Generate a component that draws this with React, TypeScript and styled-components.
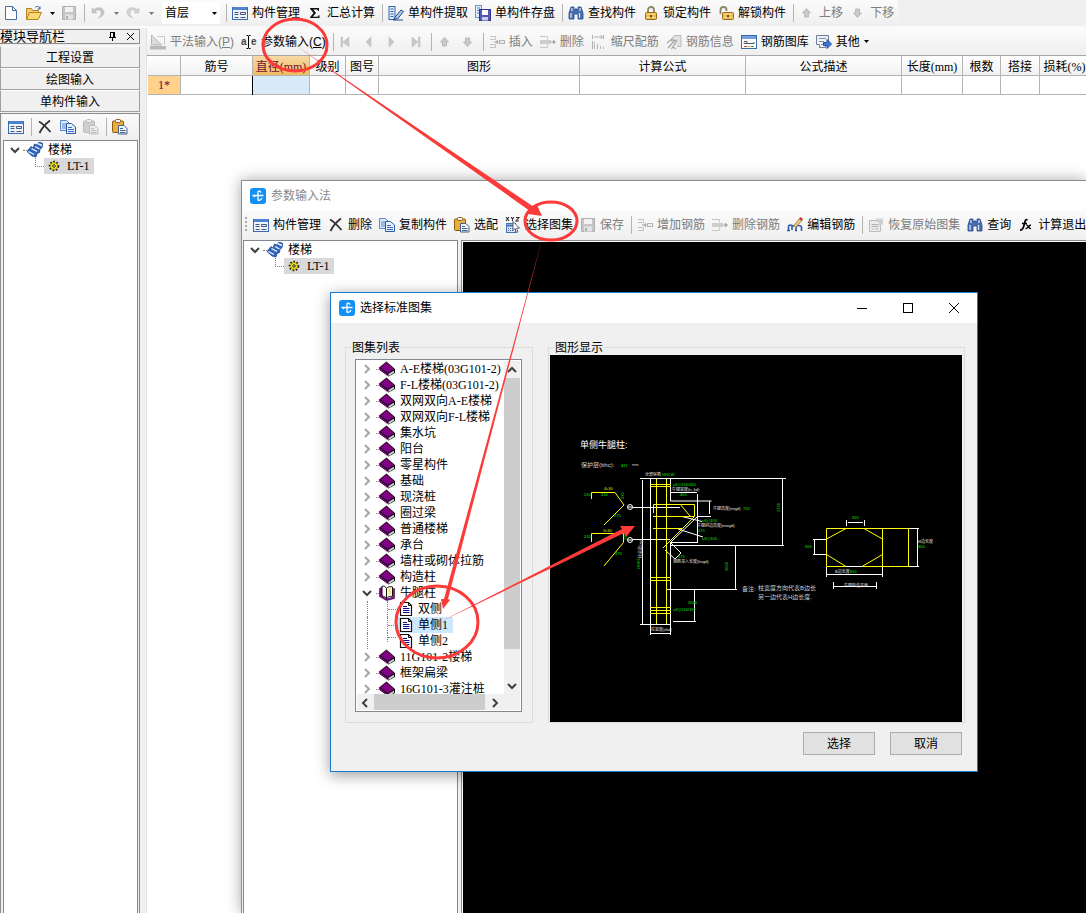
import React from "react";
import styled, { createGlobalStyle, css } from "styled-components";

const GlobalStyle = createGlobalStyle`
  *, *::before, *::after { box-sizing: border-box; }
  html, body { margin: 0; padding: 0; background: #f0f0f0; overflow: hidden; }
  body, button, select, table {
    font-family: "Liberation Serif", "Noto Sans CJK SC", sans-serif;
    font-size: 12px;
    line-height: 16px;
    color: #000;
  }
  button, select { margin: 0; padding: 0; border: 0; background: none; border-radius: 0; }
  ul { list-style: none; margin: 0; padding: 0; }
`;

/* ---------- icons ---------- */

const clipboard = (board: string, edge: string, paper: string, ink: string) => (
  <>
    <rect x="0.500" y="2" width="11" height="11.500" rx="1" fill={board} stroke={edge} />
    <rect x="3.500" y="0.500" width="5" height="3" rx="1" fill={paper} stroke={edge} />
    <path d="M6.500 6.500h5.500l3 3v5.500h-8.500z" fill={paper} stroke={ink} />
    <path d="M8 9.500h3M8 11.500h5.500M8 13.500h5.500" stroke={ink} />
  </>
);

const binoculars = (
  <>
    <path d="M3 2h3v3h1V4h2v1h1V2h3l2 6v6h-5V9H6v5H1V8z" fill="#4a6fb0" stroke="#27488a" strokeWidth=".8" />
    <path d="M3 8v5M11.500 8v5M4 3v3M12 3v3" stroke="#dbe8fa" strokeWidth="1.200" />
  </>
);

const rowsIn = (
  <>
    <path d="M1 2.500h5.500v3H1M1 13.500h5.500v-3H1" fill="none" stroke="#c2c2c2" />
    <path d="M5 8h5" fill="none" stroke="#aaa" />
    <path d="M9 5.500v5L6 8z" fill="#b4b4b4" />
    <rect x="10.500" y="6.500" width="5" height="3" fill="#eee" stroke="#b4b4b4" />
  </>
);

const rowsOut = (
  <>
    <path d="M0 2.500h7.500v3M0 13.500h7.500v-3" fill="none" stroke="#c6c6c6" />
    <rect x="0" y="6" width="11" height="4" fill="#cdcdcd" />
    <path d="M11 8h3" stroke="#a4a4a4" />
    <path d="M13 5.500v5L16 8z" fill="#a4a4a4" />
  </>
);

const padlock = (open: boolean) => (
  <>
    <path
      d={open ? "M2.500 9V5a3 3 0 0 1 6 0v1" : "M5 8V5a3 3 0 0 1 6 0v3"}
      fill="none"
      stroke="#8f8468"
      strokeWidth="1.800"
    />
    <rect x={open ? 4.5 : 2.5} y="7.500" width="11" height="7" rx="1" fill="#eebb50" stroke="#9c6a12" />
    <path d={open ? "M6 9h8M6 12.500h8" : "M4 9h8M4 12.500h8"} stroke="#fbe2a0" />
    <path d={open ? "M10 10v2.500" : "M8 10v2.500"} stroke="#4b3205" strokeWidth="1.500" />
  </>
);

const floppy = (body: string, edge: string) => (
  <>
    <path d="M1.500 1.500h13v13h-13z" fill={body} stroke={edge} />
    <rect x="4" y="2" width="8" height="5" fill="#f2f2f2" />
    <rect x="4" y="9.500" width="8" height="5" fill="#e4e4e4" />
    <rect x="5" y="11" width="2" height="3" fill={edge} />
  </>
);

const blockArrow = (
  <path d="M7.500 3.500L11.500 8h-2v4h-4V8h-2z" fill="#cacaca" stroke="#b0b0b0" strokeWidth=".8" />
);

const ICONS = {
  blank: <path d="M2.500 1.500h7l4 4v9h-11zM9.500 1.500v4h4" fill="#fff" stroke="#4a6ea0" />,
  folder: (
    <>
      <path d="M.5 14.500v-11h5l1 2h6v3" fill="#f3cf72" stroke="#b58322" />
      <path d="M.5 14.500l3-7h12l-3.500 7z" fill="#fbd875" stroke="#b58322" />
      <path d="M9 2.500c2-2 4-1 5 1m0-2v2.500h-2.500" fill="none" stroke="#36609c" />
    </>
  ),
  saveOff: floppy("#c6c6c6", "#b0b0b0"),
  undo: (
    <path d="M2 3v5h5L5.300 6.300C8 4 11 5 11 8c0 2-1 4-3 5 4-1 6-3 6-6 0-4-6-6-10.300-2.400z" fill="#c4c4c4" stroke="#b5b5b5" strokeWidth=".5" />
  ),
  redo: (
    <path d="M14 3v5H9l1.700-1.700C8 4 5 5 5 8c0 2 1 4 3 5-4-1-6-3-6-6 0-4 6-6 10.300-2.400z" fill="#d2d2d2" stroke="#bbb" strokeWidth=".5" />
  ),
  panel: (
    <>
      <rect x=".5" y="2.500" width="15" height="12" fill="#eef4fd" stroke="#3c68b0" />
      <rect x="1" y="2" width="14" height="3" fill="#4f82d0" />
      <path d="M2.500 7.500h4M2.500 9.500h4M2.500 12.500h4" stroke="#44587c" />
      <path d="M8.500 7.500h5v2h-5zM8.500 12.500h5" fill="none" stroke="#44587c" />
    </>
  ),
  sigma: <path d="M3 3h9v3h-1C10.800 4.800 10.400 4.400 9.300 4.400H6.300L9 8l-3.200 3.800h4c1 0 1.500-.4 1.700-1.600h1V13H3v-.8L6.500 8 3 3.800z" fill="#111" />,
  extract: (
    <>
      <rect x="1" y="1.500" width="6" height="13" fill="#dfeafb" stroke="#3566aa" />
      <path d="M2.500 4h3M2.500 6.500h3M2.500 9h3M2.500 11.500h3" stroke="#3566aa" />
      <path d="M6 13.500l7-8.500 2.500 1.500-6 7.500z" fill="#a9c7ee" stroke="#264d86" />
      <path d="M5 15h10" stroke="#264d86" />
    </>
  ),
  store: (
    <>
      <rect x=".5" y=".5" width="6" height="12" fill="#dfeafb" stroke="#6d94cc" />
      <path d="M2 3h3M2 5.500h3M2 8h3" stroke="#5a86c8" />
      <rect x="4.500" y="4.500" width="11" height="11" fill="#5458b4" stroke="#33368c" />
      <rect x="7" y="5" width="6" height="5" fill="#fff" />
      <rect x="7" y="12" width="6" height="3.500" fill="#c9cdea" />
    </>
  ),
  find: binoculars,
  lock: padlock(false),
  unlock: padlock(true),
  up: blockArrow,
  down: <g transform="rotate(180 7.500 8)">{blockArrow}</g>,
  ruler: (
    <>
      <path d="M1.500 1v10h10z" fill="#e0e0e0" stroke="#b5b5b5" />
      <path d="M7 2.500h7.500v8" fill="none" stroke="#c9c9c9" />
      <rect x="0" y="12" width="16" height="3.500" fill="#b9b9b9" />
      <path d="M4 6v3h3z" fill="#fff" stroke="#b5b5b5" strokeWidth=".5" />
    </>
  ),
  caretText: (
    <>
      <text x="0" y="11" fontFamily="Liberation Sans" fontWeight="bold" fontSize="10" fill="#444">a</text>
      <text x="10" y="11" fontFamily="Liberation Sans" fontWeight="bold" fontSize="10" fill="#444">e</text>
      <path d="M5.500 1.500H7l.5 1 .5-1h1.500M5.500 14.500H7l.5-1 .5 1h1.500M7.500 2.500v11" fill="none" stroke="#000" />
    </>
  ),
  first: <path d="M2 3h1.500v10H2zM10 3v10L4 8z" fill="#c8c8c8" stroke="#b8b8b8" strokeWidth=".5" />,
  prev: <path d="M9 3v10L4 8z" fill="#c8c8c8" stroke="#b8b8b8" strokeWidth=".5" />,
  next: <path d="M4 3v10l5-5z" fill="#c8c8c8" stroke="#b8b8b8" strokeWidth=".5" />,
  last: <path d="M12 3h-1.500v10H12zM4 3v10l6-5z" fill="#c8c8c8" stroke="#b8b8b8" strokeWidth=".5" />,
  insert: rowsIn,
  remove: rowsOut,
  scale: (
    <>
      <path d="M1.500 1v4M12.500 1v4M3 3h8M9.500 1l2 2-2 2M1.500 7v8" fill="none" stroke="#b0b0b0" />
      <path d="M3.500 8v7M6.500 10v5M9.500 12v3M12.500 13v2" stroke="#b8b8b8" />
    </>
  ),
  info: (
    <>
      <path d="M5.500 7.500V5l3-3.500h6.500v11h-4" fill="#e2e2e2" stroke="#bababa" />
      <path d="M1 9l5-4 2 2-5 6M2 14l7-8 1.500 1-5 8M7 13l3 2" fill="none" stroke="#a9a9a9" strokeWidth="1.300" />
    </>
  ),
  library: (
    <>
      <rect x=".5" y="1.500" width="15" height="13" fill="#fff" stroke="#3a6ab0" />
      <rect x="1" y="2" width="14" height="3" fill="#6fa0e0" />
      <path d="M3 7.500h3v2H3v-1M6 9.500h7V8" fill="none" stroke="#555" />
      <path d="M3 12.500h3" stroke="#d44" />
      <path d="M6.500 12.500h3" stroke="#e8a020" />
      <path d="M10 12.500h3" stroke="#2a8" />
    </>
  ),
  other: (
    <>
      <path d="M.5 1.500h12v7h-3v5h-6v-3h-3z" fill="#eef2f8" stroke="#6f7f99" />
      <path d="M3 4.500h7M3 7.500h5M5 10.500h3" stroke="#7f8fa9" />
      <path d="M7.500 8.500h3.500v-3L15.500 10 11 14.500v-3H7.500z" fill="#3f78dc" stroke="#1f4c9f" />
    </>
  ),
  cross: <path d="M2 2.500C5 4 10 9 13.500 13M13 1.500C9 4.500 5 9 2.500 14" fill="none" stroke="#333" strokeWidth="1.800" />,
  copy: (
    <>
      <path d="M.5 1.500h6l3 3v7h-9z" fill="#dce9fb" stroke="#5c88ca" />
      <path d="M2 5h4M2 7h4M2 9h4" stroke="#5c88ca" />
      <path d="M6.500 4.500h5l4 3.500v6.500h-9z" fill="#e6f0fd" stroke="#2c5ca6" />
      <path d="M8 8.500h4M8 10.500h6M8 12.500h6" stroke="#3d6db5" />
    </>
  ),
  paste: clipboard("#e9ae3e", "#8a5a10", "#f1f5fb", "#44608c"),
  pasteOff: clipboard("#cfcfcf", "#bcbcbc", "#ececec", "#bdbdbd"),
  stairs: (
    <>
      <path d="M0 9.500l4-5 2 1.500 1.500-4 2 1L12 0l4 1.500-1 4-2 2-.5 3-2.500 1-1 3.500-4-1z" fill="#2f66bd" stroke="#12397f" strokeWidth=".7" />
      <path d="M1.500 9.500l5.500 3M4.500 6.500l5.500 3M8 4.500l4.500 2.500M10.500 1.500l4.500 2" stroke="#e9f2ff" strokeWidth="1.400" />
    </>
  ),
  gear: (
    <>
      <circle cx="8" cy="8" r="4.200" fill="#ffee10" stroke="#222" strokeWidth="2.200" strokeDasharray="1.600 1.500" />
      <circle cx="8" cy="8" r="3.500" fill="#ffee10" stroke="#776b00" strokeWidth=".6" />
      <circle cx="8" cy="8" r="1.300" fill="#fff" stroke="#222" />
    </>
  ),
  logo: (
    <>
      <rect width="16" height="16" rx="3" fill="#1290f5" />
      <path d="M8 12.500V4.500c0-2.200 3-1.800 2.800.3M2.500 7.500h11M4.500 7.500v1.800M8 12.500c2 0 3.500-.8 3.800-2.500" fill="none" stroke="#fff" strokeWidth="1.300" />
    </>
  ),
  xyz: (
    <>
      <path d="M1 0l3 4M4 0L1 4M6 0l1.500 2L9 0M7.500 2v2M11 .5h3L11 4h3" fill="none" stroke="#333" strokeWidth="1.100" />
      <rect x="1.500" y="6.500" width="9" height="9" fill="#d4e3f8" stroke="#4673b5" />
      <path d="M2 8.500h8" stroke="#4673b5" strokeWidth="2" />
      <path d="M3 11.500h6M3 13.500h6" stroke="#4673b5" strokeDasharray="1 1" />
      <path d="M8 4.500v9l2-2 1.500 4 1.500-.6-1.500-3.800h3z" fill="#fff" stroke="#445" strokeWidth=".8" />
    </>
  ),
  edit: (
    <>
      <path d="M1.500 14V9.500c0-2 3.500-2 3.500 0V13m0-3c0-2 4-2 4 0v3m0-3c0-2 5-2 5.500 0v4M0 13.500h3M8 13.500h2" fill="none" stroke="#2d5da8" strokeWidth="1.600" />
      <path d="M6.500 9l6-7.500 2.500 2-6.500 7z" fill="#efca7c" stroke="#8a6420" strokeWidth=".7" />
      <path d="M12 2l1.500-2L16 2l-1.300 2z" fill="#c2413a" />
    </>
  ),
  restore: (
    <>
      <path d="M1.500 3.500h11v11h-11z" fill="#ececec" stroke="#bcbcbc" />
      <path d="M3.500 7.500h7M3.500 9.500h7M3.500 12h2M7 12h3.500" stroke="#b0b0b0" />
      <path d="M8 1.500h7v6l-4 1V5H8z" fill="#d0d0d0" />
    </>
  ),
  fx: (
    <>
      <path d="M9.500 3C7.500 2 7 4 6.500 6.500S5 13.500 2 13M4 6.500h5" fill="none" stroke="#000" strokeWidth="1.700" />
      <path d="M8 8c2-1 2.500 4.500 5 3.500M13 8C11 8 9.500 12 7.500 11.500" fill="none" stroke="#000" strokeWidth="1.300" />
    </>
  ),
  book: (
    <>
      <path d="M0 6.500L7.500 .5 16 8v4l-6.500 3.500L.5 9z" fill="#111" />
      <path d="M1 6.500L7.500 1.500 15 8l-6 4z" fill="#820082" />
      <path d="M1 7.500l7.500 5.500v1.500L1 9z" fill="#820082" />
      <path d="M9.500 13l5.500-3.200v2L9.500 15z" fill="#fff" />
      <path d="M9.500 14l5.500-3.200" stroke="#777" strokeWidth=".5" />
    </>
  ),
  bookOpen: (
    <>
      <path d="M.5 3.500L3 2v9l4.500 3L14.500 12V3.500h1v10l-8 2-7-4z" fill="#820082" stroke="#400040" strokeWidth=".6" />
      <path d="M3 1.500c2-1 3.500 0 4.500 2v10C6.500 12 5 11 3 11z" fill="#fff" stroke="#111" />
      <path d="M7.500 3.500c1-1.500 3.500-2.500 6-1.500v9.500c-2.500-.6-4.500 0-6 2z" fill="#fffbe0" stroke="#111" />
      <path d="M9.500 4.500l2.500-.8M9.500 6.500l2.500-.8M9.500 8.500l2.500-.8" stroke="#d8c93a" />
    </>
  ),
  doc: (
    <>
      <path d="M2.500 1.500h8l3 3v10h-11z" fill="#fff" stroke="#111" strokeWidth="1.200" />
      <path d="M10.500 1.500v3h3" fill="none" stroke="#111" />
      <path d="M5 5.500h4M5 7.500h6.500M5 9.500h6.500M5 11.500h6.500" stroke="#0a0a9a" />
    </>
  ),
};
type IconName = keyof typeof ICONS;

const IconSvg = styled.svg`
  display: block;
  flex: none;
  width: 16px;
  height: 16px;
`;
const Icon = ({ name }: { name: IconName }) => (
  <IconSvg viewBox="0 0 16 16" aria-hidden="true">{ICONS[name]}</IconSvg>
);

const CaretSvg = styled.svg`
  display: block;
  flex: none;
  width: 5px;
  height: 3px;
`;
const Caret = ({ tone = "#000" }: { tone?: string }) => (
  <CaretSvg viewBox="0 0 5 3" aria-hidden="true"><path d="M0 0h5L2.500 3z" fill={tone} /></CaretSvg>
);

const ChevronSvg = styled.svg`
  display: block;
  flex: none;
  width: 16px;
  height: 16px;
`;
const CHEVRONS = { right: "M6 4l4 4-4 4", down: "M4 6l4 4 4-4", up: "M4 10l4-4 4 4", left: "M10 4L6 8l4 4" };
const Chevron = ({ dir, tone = "#404040" }: { dir: keyof typeof CHEVRONS; tone?: string }) => (
  <ChevronSvg viewBox="0 0 16 16" aria-hidden="true">
    <path d={CHEVRONS[dir]} fill="none" stroke={tone} strokeWidth="2" />
  </ChevronSvg>
);

/* ---------- toolbars ---------- */

const Toolbar = styled.div<{ $height: number; $inset?: number }>`
  display: flex;
  align-items: center;
  flex: none;
  height: ${(p) => p.$height}px;
  padding-left: ${(p) => p.$inset ?? 0}px;
  background: linear-gradient(#fbfbfb, #efefef);
  overflow: hidden;
`;
const ToolButton = styled.button`
  display: flex;
  align-items: center;
  gap: 4px;
  flex: none;
  height: 22px;
  padding: 0 4px 0 3px;
  font-family: "Liberation Sans", "Noto Sans CJK SC", sans-serif;
  white-space: nowrap;
  &:disabled { color: #7d7d7d; }
`;
const DropButton = styled.button`
  display: flex;
  align-items: center;
  justify-content: center;
  flex: none;
  width: 12px;
  height: 22px;
`;
const Divider = styled.span`
  flex: none;
  width: 1px;
  height: 18px;
  margin: 0 2px 0 3px;
  background: #b4b4b4;
`;
const Grip = styled.span`
  flex: none;
  width: 2px;
  height: 16px;
  margin-right: 3px;
  background: repeating-linear-gradient(#a8a8a8 0 2px, transparent 2px 4px);
`;
const FloorPicker = styled.label`
  display: flex;
  align-items: center;
  flex: none;
  width: 58px;
  height: 22px;
  margin: 0 3px 0 5px;
  padding: 0 3px;
  background: #fff;
`;
const FloorSelect = styled.select`
  flex: 1;
  min-width: 0;
  appearance: none;
  outline: none;
  font-family: "Liberation Sans", "Noto Sans CJK SC", sans-serif;
`;

type Tool = "|" | { icon: IconName; text?: React.ReactNode; off?: boolean; title?: string; drop?: boolean };
const Tools = ({ items }: { items: Tool[] }) => (
  <>
    {items.map((t, i) =>
      t === "|" ? (
        <Divider key={i} />
      ) : (
        <ToolButton key={i} type="button" disabled={t.off} aria-label={t.text ? undefined : t.title}>
          <Icon name={t.icon} />
          {t.text && <span>{t.text}</span>}
          {t.drop && <Caret />}
        </ToolButton>
      )
    )}
  </>
);

const MAIN_TOOLS: Tool[] = [
  "|",
  { icon: "panel", text: "构件管理" },
  { icon: "sigma", text: "汇总计算" },
  "|",
  { icon: "extract", text: "单构件提取" },
  { icon: "store", text: "单构件存盘" },
  "|",
  { icon: "find", text: "查找构件" },
  { icon: "lock", text: "锁定构件" },
  { icon: "unlock", text: "解锁构件" },
  "|",
  { icon: "up", text: "上移", off: true },
  { icon: "down", text: "下移", off: true },
];
const INPUT_TOOLS: Tool[] = [
  { icon: "ruler", text: <>平法输入(<u>P</u>)</>, off: true },
  { icon: "caretText", text: <>参数输入(<u>C</u>)</> },
  "|",
  { icon: "first", title: "第一条", off: true },
  { icon: "prev", title: "上一条", off: true },
  { icon: "next", title: "下一条", off: true },
  { icon: "last", title: "最后一条", off: true },
  "|",
  { icon: "up", title: "上移", off: true },
  { icon: "down", title: "下移", off: true },
  "|",
  { icon: "insert", text: "插入", off: true },
  { icon: "remove", text: "删除", off: true },
  { icon: "scale", text: "缩尺配筋", off: true },
  { icon: "info", text: "钢筋信息", off: true },
  { icon: "library", text: "钢筋图库" },
  { icon: "other", text: "其他", drop: true },
];
const NAV_TOOLS: Tool[] = [
  { icon: "panel", title: "构件管理" },
  "|",
  { icon: "cross", title: "删除" },
  { icon: "copy", title: "复制" },
  { icon: "pasteOff", title: "粘贴", off: true },
  "|",
  { icon: "paste", title: "选配" },
];
const PARAM_TOOLS: Tool[] = [
  { icon: "panel", text: "构件管理" },
  { icon: "cross", text: "删除" },
  { icon: "copy", text: "复制构件" },
  { icon: "paste", text: "选配" },
  { icon: "xyz", text: "选择图集" },
  { icon: "saveOff", text: "保存", off: true },
  "|",
  { icon: "insert", text: "增加钢筋", off: true },
  { icon: "remove", text: "删除钢筋", off: true },
  { icon: "edit", text: "编辑钢筋" },
  "|",
  { icon: "restore", text: "恢复原始图集", off: true },
  { icon: "find", text: "查询" },
  { icon: "fx", text: "计算退出" },
];

/* ---------- application frame ---------- */

const Desktop = styled.div`
  position: relative;
  display: flex;
  flex-direction: column;
  height: 100vh;
  overflow: hidden;
`;
const TopBar = styled.header`
  display: flex;
  flex: none;
  height: 28px;
  border-bottom: 2px solid #fafafa;
`;
const Workspace = styled.div`
  display: flex;
  flex: 1;
  min-height: 0;
  gap: 6px;
`;
const Sidebar = styled.aside`
  display: flex;
  flex-direction: column;
  flex: none;
  width: 140px;
  padding-top: 1px;
`;
const SidebarTitle = styled.div`
  display: flex;
  align-items: center;
  height: 15px;
  margin-bottom: 2px;
  border: 1px solid #8c8c8c;
  border-left: 0;
  font-size: 13px;
`;
const SidebarName = styled.span`
  flex: 1;
`;
const SmallButton = styled.button`
  display: flex;
  align-items: center;
  justify-content: center;
  width: 18px;
  height: 13px;
`;
const ModuleButton = styled.button`
  flex: none;
  height: 22px;
  padding-top: 2px;
  border: 1px solid #a0a0a0;
  border-top-color: #fff;
  text-align: center;
`;
const ModulePane = styled.div`
  display: flex;
  flex-direction: column;
  flex: 1;
  margin-top: 1px;
  padding: 0 1px 0 2px;
  border: 1px solid #8a8a8a;
  border-bottom: 0;
`;
const TreeBox = styled.div<{ $fixed?: boolean }>`
  flex: ${(p) => (p.$fixed ? "none" : "1")};
  width: ${(p) => (p.$fixed ? "215px" : "auto")};
  padding-top: 1px;
  border: 1px solid #828790;
  border-bottom: 0;
  background: #fff;
`;
const TreeRow = styled.div`
  display: flex;
  align-items: center;
  height: 16px;
  padding-left: 3px;
`;
const TreeLabel = styled.span`
  padding-left: 5px;
`;
const Dots = styled.span<{ $width: number; $start?: number }>`
  flex: none;
  align-self: center;
  width: ${(p) => p.$width}px;
  margin-left: ${(p) => p.$start ?? 0}px;
  border-top: 1px dotted #808080;
`;
const TreeLeaf = styled.div`
  display: flex;
  align-items: center;
  height: 16px;
  padding-left: 31px;
`;
const Elbow = styled.span`
  align-self: flex-start;
  width: 9px;
  height: 9px;
  border: dotted #808080;
  border-width: 0 0 1px 1px;
`;
const LeafMark = styled.span`
  display: flex;
  gap: 5px;
  height: 16px;
  padding: 0 5px 0 2px;
  background: #d9d9d9;
`;

const ComponentTree = () => (
  <>
    <TreeRow>
      <Chevron dir="down" />
      <Dots $width={4} />
      <Icon name="stairs" />
      <TreeLabel>楼梯</TreeLabel>
    </TreeRow>
    <TreeLeaf>
      <Elbow />
      <LeafMark>
        <Icon name="gear" />
        LT-1
      </LeafMark>
    </TreeLeaf>
  </>
);

const MainArea = styled.main`
  display: flex;
  flex-direction: column;
  flex: 1;
  min-width: 0;
  background: #fff;
  border-left: 1px solid #e2e2e2;
`;
const GridWrap = styled.div`
  overflow: hidden;
  padding-left: 1px;
  border-top: 1px solid #a8a8a8;
`;
const BarTable = styled.table`
  width: 942px;
  table-layout: fixed;
  border-collapse: separate;
  border-spacing: 0;
`;
const HeadCell = styled.th<{ $width: number; $active?: boolean }>`
  width: ${(p) => p.$width}px;
  height: 20px;
  padding: 2px 0 0;
  border: solid #b4b4b4;
  border-width: 0 1px 1px 0;
  background: ${(p) => (p.$active ? "linear-gradient(#f8d9a4, #f0bc62)" : "linear-gradient(#fff, #f1f1f1)")};
  color: ${(p) => (p.$active ? "#6b1030" : "#000")};
  font-weight: normal;
  white-space: nowrap;
`;
const BodyCell = styled.td<{ $kind?: "number" | "active" }>`
  height: 19px;
  padding: 0;
  border: solid #b4b4b4;
  border-width: 0 1px 1px 0;
  text-align: center;
  ${(p) => p.$kind === "number" && css`background: #ffd18a; color: #5c0050;`}
  ${(p) => p.$kind === "active" && css`background: #d8e9f8; box-shadow: -1px 0 0 #000;`}
`;
const COLUMNS: [string, number][] = [
  ["", 33], ["筋号", 72], ["直径(mm)", 57], ["级别", 36], ["图号", 33], ["图形", 201],
  ["计算公式", 166], ["公式描述", 156], ["长度(mm)", 61], ["根数", 38], ["搭接", 39], ["损耗(%)", 50],
];

/* ---------- parameter window ---------- */

const ParamWindow = styled.section`
  position: absolute;
  top: 180px;
  right: 0;
  bottom: 0;
  left: 241px;
  display: flex;
  flex-direction: column;
  border: solid #8e8e8e;
  border-width: 1px 0 0 1px;
  background: #f0f0f0;
  box-shadow: 0 0 14px rgba(0, 0, 0, 0.35);
`;
const WindowTitle = styled.div<{ $height: number; $muted?: boolean }>`
  display: flex;
  align-items: center;
  flex: none;
  gap: 5px;
  height: ${(p) => p.$height}px;
  padding-left: 8px;
  background: #fff;
  color: ${(p) => (p.$muted ? "#8a8a8a" : "#000")};
  font-family: "Liberation Sans", "Noto Sans CJK SC", sans-serif;
`;
const ParamBody = styled.div`
  display: flex;
  flex: 1;
  gap: 3px;
  min-height: 0;
  padding-left: 1px;
`;
const BlackView = styled.div`
  flex: 1;
  border: solid #8a8a8a;
  border-width: 1px 0 0 1px;
  background: #000;
  box-shadow: inset 1px 1px 0 #fff;
`;

/* ---------- atlas dialog ---------- */

const Dialog = styled.section`
  position: absolute;
  top: 292px;
  left: 330px;
  width: 648px;
  height: 480px;
  border: 1px solid #1a78cc;
  background: #f0f0f0;
  box-shadow: 0 3px 14px rgba(0, 0, 0, 0.4);
`;
const TitleText = styled.span`
  flex: 1;
`;
const CaptionButtons = styled.div`
  display: flex;
`;
const CaptionButton = styled.button`
  display: flex;
  align-items: center;
  justify-content: center;
  width: 46px;
  height: 30px;
`;
const DialogBody = styled.div`
  display: flex;
  gap: 15px;
  padding: 17px 12px 0 14px;
`;
const Group = styled.fieldset<{ $grow?: boolean }>`
  flex: ${(p) => (p.$grow ? "1" : "none")};
  width: ${(p) => (p.$grow ? "auto" : "188px")};
  min-width: 0;
  margin: 0;
  padding: 0;
  border: 1px solid #dcdcdc;
`;
const Legend = styled.legend`
  height: 14px;
  margin-left: 6px;
  padding: 0;
  line-height: 16px;
`;
const AtlasBox = styled.div`
  display: grid;
  grid-template-columns: 1fr 16px;
  grid-template-rows: 333px 16px;
  margin: 5px 10px 9px 9px;
  padding: 1px;
  border: 1px solid #828790;
  background: #fff;
`;
const AtlasList = styled.ul`
  min-width: 0;
  overflow: hidden;
`;
const AtlasRow = styled.li`
  display: flex;
  align-items: center;
  height: 16px;
  padding-left: 2px;
  white-space: nowrap;
`;
const AtlasName = styled.span`
  padding-left: 5px;
`;
const AtlasLeaf = styled.li`
  display: flex;
  align-items: center;
  height: 16px;
  margin-left: 10px;
  padding-left: 19px;
  border-left: 1px dotted #808080;
  white-space: nowrap;
`;
const Branch = styled.span<{ $last?: boolean }>`
  display: flex;
  align-items: center;
  align-self: flex-start;
  width: 11px;
  height: ${(p) => (p.$last ? "9px" : "16px")};
  border-left: 1px dotted #808080;
`;
const LeafName = styled.span<{ $selected?: boolean }>`
  display: flex;
  gap: 4px;
  padding-right: 5px;
  background: ${(p) => (p.$selected ? "#cce8ff" : "transparent")};
`;
const VScroll = styled.div`
  display: flex;
  flex-direction: column;
  background: #f0f0f0;
`;
const HScroll = styled.div`
  display: flex;
  grid-column: 1 / 3;
  padding-right: 16px;
  background: #f0f0f0;
`;
const ScrollButton = styled.button`
  flex: none;
  width: 17px;
  height: 17px;
`;
const Thumb = styled.span<{ $size: number }>`
  flex: 0 0 ${(p) => p.$size}px;
  background: #cdcdcd;
`;
const ScrollGap = styled.span`
  flex: 1;
`;
const Canvas = styled.svg`
  display: block;
  width: 412px;
  height: 367px;
  margin: 1px 0 0 1px;
  background: #000;
`;
const Actions = styled.div`
  display: flex;
  justify-content: flex-end;
  gap: 15px;
  padding: 9px 15px 0 0;
`;
const ActionButton = styled.button`
  width: 72px;
  height: 23px;
  border: 1px solid #adadad;
  background: #e1e1e1;
`;

const BOOKS_BEFORE = [
  "A-E楼梯(03G101-2)", "F-L楼梯(03G101-2)", "双网双向A-E楼梯", "双网双向F-L楼梯", "集水坑", "阳台", "零星构件",
  "基础", "现浇桩", "圈过梁", "普通楼梯", "承台", "墙柱或砌体拉筋", "构造柱",
];
const LEAVES = ["双侧", "单侧1", "单侧2"];
const BOOKS_AFTER = ["11G101-2楼梯", "框架扁梁", "16G101-3灌注桩"];

const BookRow = ({ name, open }: { name: string; open?: boolean }) => (
  <AtlasRow>
    <Chevron dir={open ? "down" : "right"} tone={open ? "#404040" : "#a6a6a6"} />
    <Dots $width={3} $start={1} />
    <Icon name={open ? "bookOpen" : "book"} />
    <AtlasName>{name}</AtlasName>
  </AtlasRow>
);

type Note = [x: number, y: number, text: string, size?: number, turn?: boolean];
const GREEN_NOTES: Note[] = [
  [71, 112, "421", 4], [112, 121, "HHCW"], [123, 131, "c8@100/200"], [130, 141, "400"], [34, 141, "230"], [51, 141, "230"],
  [74, 144, "230", 4, true], [64, 162, "270"], [34, 183, "230"], [77, 185, "230", 4, true], [65, 200, "270"],
  [193, 155, "700"], [152, 167, "c8@200"], [148, 177, "270"], [152, 185, "c8@200"], [128, 203, "270"],
  [230, 157, "2100", 4, true], [178, 216, "2000", 4, true], [138, 249, "2000"], [123, 256, "c8@100/200"],
  [90, 214, "HHHC", 4, true], [302, 164, "500"], [255, 193, "500"], [300, 218, "800"], [368, 193, "800"],
];
const WHITE_NOTES: Note[] = [
  [95, 121, "全部纵筋"], [122, 136, "牛腿宽度(n_kd)"], [163, 155, "牛腿高度(nngd)"], [147, 172, "牛腿斜边高度(nnxgd)"],
  [123, 208, "钢筋深入长度(lnrgd)"], [101, 276, "柱宽度(zkd)"], [92, 203, "柱总高(zg)", 4, true],
  [285, 218, "B边长度"], [368, 188, "H边长度"], [294, 232, "牛腿构造平面"],
];
const Notes = ({ items, fill, strong }: { items: Note[]; fill: string; strong?: boolean }) => (
  <g fill={fill} fontFamily='"Liberation Sans", "Noto Sans CJK SC", sans-serif' fontWeight={strong ? "bold" : "normal"}>
    {items.map(([x, y, text, size = 4, turn]) => (
      <text key={`${x}-${y}`} x={x} y={y} fontSize={size} transform={turn ? `rotate(-90 ${x} ${y})` : undefined}>
        {text}
      </text>
    ))}
  </g>
);

const CorbelDrawing = () => (
  <Canvas viewBox="0 0 412 367" role="img" aria-label="单侧牛腿柱">
    <g fill="none" stroke="#fff">
      <path d="M90 123.500H236M232.500 123v67M120 190.500H234M185.500 190v45M116 234.500H187M144.500 235v31M123 266.500h23" />
      <path d="M92.500 125V270M90 269.500h31M100.500 123V280M120.500 123v23h41M120.500 187V280M100 278.500h21" />
      <path d="M121 137.500h26M147.500 139v48M121 187.500h27M159.500 146v13M148 161.500h13M147 162L121 187" />
      <path d="M132 161.500l20 5M128 174l25 8M82.500 152.500H130M82.500 184.500H120M121 188l10 10-6 6-10-9" />
      <circle cx="80" cy="152" r="2.500" />
      <circle cx="80" cy="185" r="2.500" />
      <path d="M78 152h4M78 185h4" />
      <path d="M296 211.500h16M358 173.500h11M367.500 173v38M358 211.500h11M263 184.500h13M263 199.500h13M264.500 184v15" />
      <path d="M296.500 165v6M314.500 165v6M298 167.500h15M276.500 212v10M332.500 212v10M277 219.500h56M283.500 227v7M326.500 227v7M284 231.500h43" />
    </g>
    <g fill="none" stroke="#ff0">
      <path d="M106.500 124V269M116.500 124V269M100 129.500h21M100 131.500h21M100 222.500h21M100 225.500h21M100 252.500h21M100 255.500h21M100 258.500h21" />
      <path d="M103.500 158v-8.500h41v12H103M103 173.500h30M130 149l10 12M144 162L113 193" />
      <path d="M41.500 144v-6.500H65L74 150 54 170M41.500 187v-8.500h32v9L54 211" />
      <path d="M276.500 173.500h82v38h-46M296 211.500h-19.500v-38M332.500 173v39M276.500 184l19.500-10.500M314 173.500L332.500 184M276.500 199.500L296 211.500M312 211.500l20.500-12" />
    </g>
    <Notes items={GREEN_NOTES} fill="#00a800" strong />
    <Notes items={WHITE_NOTES} fill="#e4e4e4" />
    <Notes items={[[54, 135, "4c30"], [53, 177, "3c30"]]} fill="#e0e000" />
    <Notes items={[[30, 93, "单侧牛腿柱:", 9]]} fill="#fff" />
    <Notes
      items={[[31, 112, "保护层(bhc):", 6], [82, 111, "mm", 4], [192, 236, "备注:", 6], [208, 235, "柱宽度方向代表B边长", 6], [208, 244, "另一边代表H边长度.", 6]]}
      fill="#d0d0d0"
    />
  </Canvas>
);

/* ---------- markup over the windows ---------- */

const Markup = styled.svg`
  position: absolute;
  top: 0;
  left: 0;
  width: 1086px;
  height: 913px;
  overflow: visible;
  pointer-events: none;
`;

export default function App() {
  return (
    <Desktop>
      <GlobalStyle />
      <TopBar>
        <Toolbar $height={26}>
          <Tools items={[{ icon: "blank", title: "新建" }, { icon: "folder", title: "打开" }]} />
          <DropButton type="button" aria-label="最近打开"><Caret /></DropButton>
          <Tools items={[{ icon: "saveOff", title: "保存", off: true }, "|", { icon: "undo", title: "撤销", off: true }]} />
          <DropButton type="button" aria-label="撤销列表"><Caret tone="#777" /></DropButton>
          <Tools items={[{ icon: "redo", title: "恢复", off: true }]} />
          <DropButton type="button" aria-label="恢复列表"><Caret tone="#777" /></DropButton>
          <FloorPicker>
            <FloorSelect aria-label="楼层" defaultValue="首层">
              <option>首层</option>
            </FloorSelect>
            <Caret />
          </FloorPicker>
          <Tools items={MAIN_TOOLS} />
        </Toolbar>
      </TopBar>

      <Workspace>
        <Sidebar>
          <SidebarTitle>
            <SidebarName>模块导航栏</SidebarName>
            <SmallButton type="button" aria-label="固定">
              <svg width="9" height="9" viewBox="0 0 9 9"><path d="M2.500 0v5M2 .5h4M5.500 0v5M6.500 0v5M1 5.500h7M4.500 6v3" stroke="#000" fill="none" /></svg>
            </SmallButton>
            <SmallButton type="button" aria-label="关闭">
              <svg width="9" height="9" viewBox="0 0 9 9"><path d="M1 1l7 7M8 1L1 8" stroke="#000" /></svg>
            </SmallButton>
          </SidebarTitle>
          <ModuleButton type="button">工程设置</ModuleButton>
          <ModuleButton type="button">绘图输入</ModuleButton>
          <ModuleButton type="button">单构件输入</ModuleButton>
          <ModulePane>
            <Toolbar $height={26} $inset={2}>
              <Tools items={NAV_TOOLS} />
            </Toolbar>
            <TreeBox><ComponentTree /></TreeBox>
          </ModulePane>
        </Sidebar>

        <MainArea>
          <Toolbar $height={27}>
            <Tools items={INPUT_TOOLS} />
          </Toolbar>
          <GridWrap>
            <BarTable>
              <thead>
                <tr>
                  {COLUMNS.map(([name, width], i) => (
                    <HeadCell key={i} $width={width} $active={i === 2}>{name}</HeadCell>
                  ))}
                </tr>
              </thead>
              <tbody>
                <tr>
                  {COLUMNS.map((_, i) => (
                    <BodyCell key={i} $kind={i === 0 ? "number" : i === 2 ? "active" : undefined}>
                      {i === 0 ? "1*" : ""}
                    </BodyCell>
                  ))}
                </tr>
              </tbody>
            </BarTable>
          </GridWrap>
        </MainArea>
      </Workspace>

      <ParamWindow>
        <WindowTitle $height={29} $muted>
          <Icon name="logo" />
          <TitleText>参数输入法</TitleText>
        </WindowTitle>
        <Toolbar $height={30} $inset={3}>
          <Grip />
          <Tools items={PARAM_TOOLS} />
        </Toolbar>
        <ParamBody>
          <TreeBox $fixed><ComponentTree /></TreeBox>
          <BlackView />
        </ParamBody>
      </ParamWindow>

      <Dialog role="dialog" aria-label="选择标准图集">
        <WindowTitle $height={30}>
          <Icon name="logo" />
          <TitleText>选择标准图集</TitleText>
          <CaptionButtons>
            <CaptionButton type="button" aria-label="最小化">
              <svg width="10" height="10" viewBox="0 0 10 10"><path d="M0 5.500h10" stroke="#000" /></svg>
            </CaptionButton>
            <CaptionButton type="button" aria-label="最大化">
              <svg width="10" height="10" viewBox="0 0 10 10"><rect x=".5" y=".5" width="9" height="9" fill="none" stroke="#000" /></svg>
            </CaptionButton>
            <CaptionButton type="button" aria-label="关闭">
              <svg width="10" height="10" viewBox="0 0 10 10"><path d="M0 0l10 10M10 0L0 10" stroke="#000" /></svg>
            </CaptionButton>
          </CaptionButtons>
        </WindowTitle>
        <DialogBody>
          <Group>
            <Legend>图集列表</Legend>
            <AtlasBox>
              <AtlasList>
                {BOOKS_BEFORE.map((b) => <BookRow key={b} name={b} />)}
                <BookRow name="牛腿柱" open />
                {LEAVES.map((leaf, i) => (
                  <AtlasLeaf key={leaf}>
                    <Branch $last={i === 2}><Dots $width={8} /></Branch>
                    <LeafName $selected={i === 1}>
                      <Icon name="doc" />
                      {leaf}
                    </LeafName>
                  </AtlasLeaf>
                ))}
                {BOOKS_AFTER.map((b) => <BookRow key={b} name={b} />)}
              </AtlasList>
              <VScroll>
                <ScrollButton type="button" aria-label="向上滚动"><Chevron dir="up" /></ScrollButton>
                <Thumb $size={271} />
                <ScrollGap />
                <ScrollButton type="button" aria-label="向下滚动"><Chevron dir="down" /></ScrollButton>
              </VScroll>
              <HScroll>
                <ScrollButton type="button" aria-label="向左滚动"><Chevron dir="left" /></ScrollButton>
                <Thumb $size={111} />
                <ScrollGap />
                <ScrollButton type="button" aria-label="向右滚动"><Chevron dir="right" /></ScrollButton>
              </HScroll>
            </AtlasBox>
          </Group>
          <Group $grow>
            <Legend>图形显示</Legend>
            <CorbelDrawing />
          </Group>
        </DialogBody>
        <Actions>
          <ActionButton type="button">选择</ActionButton>
          <ActionButton type="button">取消</ActionButton>
        </Actions>
      </Dialog>

      <Markup viewBox="0 0 1086 913" aria-hidden="true">
        <g fill="none" stroke="#fb3b39" strokeWidth="3">
          <ellipse cx="295" cy="45" rx="32" ry="26" />
          <ellipse cx="551" cy="221" rx="26" ry="19" />
          <ellipse cx="437" cy="622" rx="41" ry="36" />
        </g>
        <g fill="#fb3b39">
          <path d="M295 45L534 207l3-2 5 11-14-2 2-3z" />
          <path d="M544 232L448 599l2 1-7 9-2-10 3 0z" />
          <path d="M440 622L622 529l-2-3 15 0-9 11-2-4z" />
        </g>
      </Markup>
    </Desktop>
  );
}
